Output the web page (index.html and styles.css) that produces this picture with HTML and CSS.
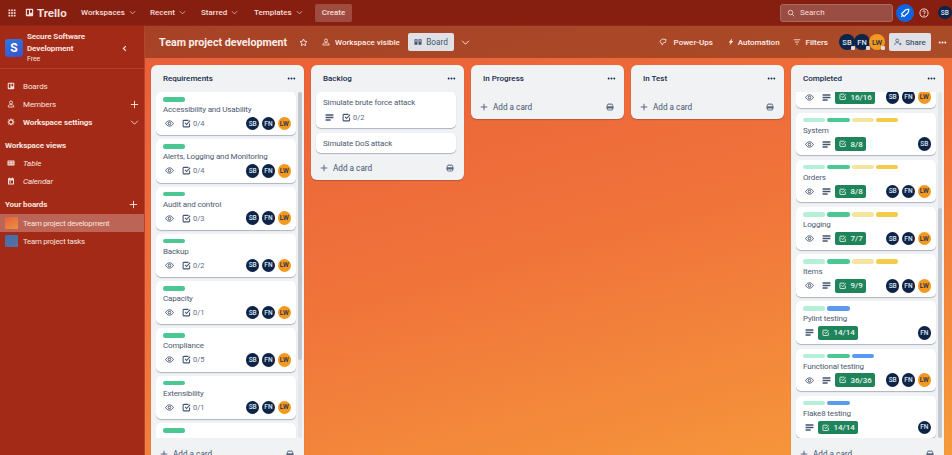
FILE: index.html
```html
<!DOCTYPE html>
<html lang="en">
<head>
<meta charset="utf-8">
<title>Team project development | Trello</title>
<link rel="stylesheet" href="styles.css">
</head>
<body>
<svg class="defs" aria-hidden="true">
  <symbol id="i-eye" viewBox="0 0 16 16"><path d="M1 8C3 4.800 5.300 3.300 8 3.300S13 4.800 15 8C13 11.200 10.700 12.700 8 12.700S3 11.200 1 8Z" fill="none" stroke="currentColor" stroke-width="1.700"/><circle cx="8" cy="8" r="2.300" fill="none" stroke="currentColor" stroke-width="1.700"/></symbol>
  <symbol id="i-check" viewBox="0 0 16 16"><path d="M13.500 8v5a1 1 0 0 1-1 1H3a1 1 0 0 1-1-1V3.500a1 1 0 0 1 1-1h8.500" fill="none" stroke="currentColor" stroke-width="1.900"/><path d="M5.500 7 8 9.800l6.500-7" fill="none" stroke="currentColor" stroke-width="1.900"/></symbol>
  <symbol id="i-lines" viewBox="0 0 16 16"><path d="M1 3.500h14M1 8h14M1 12.500h9" fill="none" stroke="currentColor" stroke-width="2.400"/></symbol>
  <symbol id="i-plus" viewBox="0 0 16 16"><path d="M8 1.500v13M1.500 8h13" fill="none" stroke="currentColor" stroke-width="1.700"/></symbol>
  <symbol id="i-down" viewBox="0 0 16 16"><path d="M2 5l6 6 6-6" fill="none" stroke="currentColor" stroke-width="1.500"/></symbol>
  <symbol id="i-left" viewBox="0 0 16 16"><path d="M11 2.500 5.500 8l5.500 5.500" fill="none" stroke="currentColor" stroke-width="2.800"/></symbol>
  <symbol id="i-dots" viewBox="0 0 16 16"><circle cx="3" cy="8" r="1.700" fill="currentColor"/><circle cx="8" cy="8" r="1.700" fill="currentColor"/><circle cx="13" cy="8" r="1.700" fill="currentColor"/></symbol>
  <symbol id="i-template" viewBox="0 0 16 16"><rect x="2.500" y="2.500" width="11" height="11.500" rx="2" fill="none" stroke="currentColor" stroke-width="1.800"/><rect x="1" y="6.500" width="14" height="4.500" rx="1" fill="currentColor"/><path d="M5 2.500V1M8 2.500V1M11 2.500V1" stroke="currentColor" stroke-width="1.300"/></symbol>
  <symbol id="i-board" viewBox="0 0 16 16"><path fill-rule="evenodd" fill="currentColor" d="M3 1.500h10A1.500 1.500 0 0 1 14.500 3v10a1.500 1.500 0 0 1-1.500 1.500H3A1.500 1.500 0 0 1 1.500 13V3A1.500 1.500 0 0 1 3 1.500ZM3.500 3.500v8h3.500v-8ZM9 3.500v5h3.500v-5Z"/></symbol>
  <symbol id="i-views" viewBox="0 0 16 16"><path fill-rule="evenodd" fill="currentColor" d="M1 2.500h6v11H1ZM9 2.500h6v11H9ZM2.800 4.500v3h2.400v-3ZM10.800 4.500v3h2.400v-3Z"/></symbol>
  <symbol id="i-person" viewBox="0 0 16 16"><circle cx="8" cy="5" r="3" fill="none" stroke="currentColor" stroke-width="1.700"/><path d="M2.500 14v-1.500C2.500 10.500 4 9.500 5.500 9.500h5c1.500 0 3 1 3 3V14Z" fill="none" stroke="currentColor" stroke-width="1.700"/></symbol>
  <symbol id="i-gear" viewBox="0 0 16 16"><circle cx="8" cy="8" r="4.300" fill="none" stroke="currentColor" stroke-width="2.200"/><path d="M8 1v2.500M8 12.500V15M1 8h2.500M12.500 8H15M3 3l1.800 1.800M11.200 11.200 13 13M13 3l-1.800 1.800M4.800 11.200 3 13" stroke="currentColor" stroke-width="1.800"/></symbol>
  <symbol id="i-table" viewBox="0 0 16 16"><path fill-rule="evenodd" fill="currentColor" d="M2 3h12a1 1 0 0 1 1 1v8a1 1 0 0 1-1 1H2a1 1 0 0 1-1-1V4a1 1 0 0 1 1-1Zm1 2v1.500h4V5Zm6 0v1.500h4V5ZM3 8v1h4V8Zm6 0v1h4V8Zm-6 2.500V11h4v-.5Zm6 0V11h4v-.5Z"/></symbol>
  <symbol id="i-cal" viewBox="0 0 16 16"><path fill-rule="evenodd" fill="currentColor" d="M4 1h1.500v1.500h5V1H12v1.500h1a1 1 0 0 1 1 1V14a1 1 0 0 1-1 1H3a1 1 0 0 1-1-1V3.500a1 1 0 0 1 1-1h1ZM4 7v6h8V7Z"/><rect x="5" y="8.500" width="3" height="2.500" fill="currentColor"/></symbol>
  <symbol id="i-star" viewBox="0 0 16 16"><path d="m8 1.800 1.900 4 4.300.5-3.200 3 .9 4.300L8 11.500l-3.900 2.100.9-4.300-3.200-3 4.300-.5Z" fill="none" stroke="currentColor" stroke-width="1.400"/></symbol>
  <symbol id="i-group" viewBox="0 0 16 16"><circle cx="8" cy="5" r="3" fill="none" stroke="currentColor" stroke-width="1.600"/><path d="M1.500 14c.3-2.800 2-4.200 3.500-4.200h6c1.500 0 3.200 1.400 3.500 4.200Z" fill="none" stroke="currentColor" stroke-width="1.600"/></symbol>
  <symbol id="i-bolt" viewBox="0 0 16 16"><path d="M10 1 3.500 9H7l-2 6 7.500-9H9Z" fill="currentColor"/></symbol>
  <symbol id="i-filter" viewBox="0 0 16 16"><path d="M1.500 3.500h13M4 8h8M6.500 12.500h3" fill="none" stroke="currentColor" stroke-width="1.600"/></symbol>
  <symbol id="i-rocket" viewBox="0 0 16 16"><path d="M14 2c-4-.3-7 1.500-8.800 5L4 7.500 2.500 9.500l4 4 2-1.500.5-1.200C12.500 9 14.300 6 14 2Z" fill="none" stroke="currentColor" stroke-width="1.800"/><path d="M2 14l2-2" stroke="currentColor" stroke-width="1.800"/></symbol>
  <symbol id="i-power" viewBox="0 0 16 16"><path d="M14 3 6.500 2 2 6.500 6.500 14 9 9.500l4-1Z" fill="none" stroke="currentColor" stroke-width="1.600"/></symbol>
  <symbol id="i-share" viewBox="0 0 16 16"><circle cx="6.500" cy="5" r="3" fill="none" stroke="currentColor" stroke-width="1.500"/><path d="M1.500 14c0-3 1.500-4.500 3.500-4.500h3c1 0 1.500.3 2 .8M12.500 9.500v5M10 12h5" fill="none" stroke="currentColor" stroke-width="1.500"/></symbol>
  <symbol id="i-search" viewBox="0 0 16 16"><circle cx="7" cy="7" r="4.500" fill="none" stroke="currentColor" stroke-width="1.600"/><path d="m10.500 10.500 4 4" stroke="currentColor" stroke-width="1.600"/></symbol>
  <symbol id="i-help" viewBox="0 0 16 16"><circle cx="8" cy="8" r="6.500" fill="none" stroke="currentColor" stroke-width="1.500"/><path d="M5.800 6.300C6 5 7 4.600 8 4.600c1.300 0 2.200.8 2.200 1.800 0 1.500-2.200 1.500-2.200 3.200" fill="none" stroke="currentColor" stroke-width="1.500"/><circle cx="8" cy="11.600" r="1" fill="currentColor"/></symbol>
  <symbol id="i-apps" viewBox="0 0 16 16"><g fill="currentColor"><rect x="1" y="1" width="3.400" height="3.400"/><rect x="6.300" y="1" width="3.400" height="3.400"/><rect x="11.600" y="1" width="3.400" height="3.400"/><rect x="1" y="6.300" width="3.400" height="3.400"/><rect x="6.300" y="6.300" width="3.400" height="3.400"/><rect x="11.600" y="6.300" width="3.400" height="3.400"/><rect x="1" y="11.600" width="3.400" height="3.400"/><rect x="6.300" y="11.600" width="3.400" height="3.400"/><rect x="11.600" y="11.600" width="3.400" height="3.400"/></g></symbol>
</svg>

<header class="topbar">
  <svg class="ico ico-apps"><use href="#i-apps"/></svg>
  <div class="logo"><svg class="ico ico-logo"><use href="#i-board"/></svg><span>Trello</span></div>
  <nav class="nav">
    <span class="nav-item nav-w">Workspaces <svg class="ico ico-chev"><use href="#i-down"/></svg></span>
    <span class="nav-item nav-r">Recent <svg class="ico ico-chev"><use href="#i-down"/></svg></span>
    <span class="nav-item nav-s">Starred <svg class="ico ico-chev"><use href="#i-down"/></svg></span>
    <span class="nav-item nav-t">Templates <svg class="ico ico-chev"><use href="#i-down"/></svg></span>
    <span class="create">Create</span>
  </nav>
  <div class="top-right">
    <div class="search"><svg class="ico ico-search"><use href="#i-search"/></svg><span>Search</span></div>
    <span class="rocket"><svg class="ico ico-rocket"><use href="#i-rocket"/></svg></span>
    <svg class="ico ico-help"><use href="#i-help"/></svg>
    <span class="av av-me">SB</span>
  </div>
</header>

<div class="main">
  <aside class="sidebar">
    <div class="ws">
      <span class="ws-tile">S</span>
      <div class="ws-text"><div class="ws-name">Secure Software<br>Development</div><div class="ws-plan">Free</div></div>
      <svg class="ico ico-collapse"><use href="#i-left"/></svg>
    </div>
    <div class="side-row"><svg class="ico ico-side"><use href="#i-board"/></svg><span>Boards</span></div>
    <div class="side-row"><svg class="ico ico-side"><use href="#i-person"/></svg><span>Members</span><svg class="ico ico-side-end"><use href="#i-plus"/></svg></div>
    <div class="side-row side-strong"><svg class="ico ico-side"><use href="#i-gear"/></svg><span>Workspace settings</span><svg class="ico ico-side-end"><use href="#i-down"/></svg></div>
    <div class="side-head">Workspace views</div>
    <div class="side-row side-em"><svg class="ico ico-side"><use href="#i-table"/></svg><span>Table</span></div>
    <div class="side-row side-em"><svg class="ico ico-side"><use href="#i-cal"/></svg><span>Calendar</span></div>
    <div class="side-head side-head-boards"><span>Your boards</span><svg class="ico ico-side-end"><use href="#i-plus"/></svg></div>
    <div class="side-board is-active"><span class="thumb thumb-orange"></span><span>Team project development</span></div>
    <div class="side-board"><span class="thumb thumb-blue"></span><span>Team project tasks</span></div>
  </aside>

  <section class="board">
    <div class="boardbar">
      <h1 class="board-title">Team project development</h1>
      <svg class="ico ico-star"><use href="#i-star"/></svg>
      <span class="bar-item bar-vis"><svg class="ico ico-bar"><use href="#i-group"/></svg>Workspace visible</span>
      <span class="view-btn"><svg class="ico ico-bar"><use href="#i-views"/></svg>Board</span>
      <svg class="ico ico-view-chev"><use href="#i-down"/></svg>
      <div class="bar-right">
        <span class="bar-item bar-power"><svg class="ico ico-bar"><use href="#i-power"/></svg>Power-Ups</span>
        <span class="bar-item bar-auto"><svg class="ico ico-bar"><use href="#i-bolt"/></svg>Automation</span>
        <span class="bar-item bar-filter"><svg class="ico ico-bar"><use href="#i-filter"/></svg>Filters</span>
        <div class="members">
          <span class="av av-bar">SB<i class="av-tag"></i></span><span class="av av-bar">FN<i class="av-tag"></i></span><span class="av av-bar av-lw">LW<i class="av-tag"></i></span>
        </div>
        <span class="share"><svg class="ico ico-bar"><use href="#i-share"/></svg>Share</span>
        <svg class="ico ico-more"><use href="#i-dots"/></svg>
      </div>
    </div>

    <div class="lists">
      <div class="list list-tall">
        <div class="list-head"><span>Requirements</span><svg class="ico ico-dots"><use href="#i-dots"/></svg></div>
        <div class="scroll">
          <div class="cards">
            <article class="card"><div class="labels"><i class="lb lb-g"></i></div><div class="card-title">Accessibility and Usability</div><div class="foot"><svg class="ico ico-f"><use href="#i-eye"/></svg><svg class="ico ico-f"><use href="#i-check"/></svg><span class="count">0/4</span><div class="avs"><span class="av">SB</span><span class="av">FN</span><span class="av av-lw">LW</span></div></div></article>
            <article class="card"><div class="labels"><i class="lb lb-g"></i></div><div class="card-title">Alerts, Logging and Monitoring</div><div class="foot"><svg class="ico ico-f"><use href="#i-eye"/></svg><svg class="ico ico-f"><use href="#i-check"/></svg><span class="count">0/4</span><div class="avs"><span class="av">SB</span><span class="av">FN</span><span class="av av-lw">LW</span></div></div></article>
            <article class="card"><div class="labels"><i class="lb lb-g"></i></div><div class="card-title">Audit and control</div><div class="foot"><svg class="ico ico-f"><use href="#i-eye"/></svg><svg class="ico ico-f"><use href="#i-check"/></svg><span class="count">0/3</span><div class="avs"><span class="av">SB</span><span class="av">FN</span><span class="av av-lw">LW</span></div></div></article>
            <article class="card"><div class="labels"><i class="lb lb-g"></i></div><div class="card-title">Backup</div><div class="foot"><svg class="ico ico-f"><use href="#i-eye"/></svg><svg class="ico ico-f"><use href="#i-check"/></svg><span class="count">0/2</span><div class="avs"><span class="av">SB</span><span class="av">FN</span><span class="av av-lw">LW</span></div></div></article>
            <article class="card"><div class="labels"><i class="lb lb-g"></i></div><div class="card-title">Capacity</div><div class="foot"><svg class="ico ico-f"><use href="#i-eye"/></svg><svg class="ico ico-f"><use href="#i-check"/></svg><span class="count">0/1</span><div class="avs"><span class="av">SB</span><span class="av">FN</span><span class="av av-lw">LW</span></div></div></article>
            <article class="card"><div class="labels"><i class="lb lb-g"></i></div><div class="card-title">Compliance</div><div class="foot"><svg class="ico ico-f"><use href="#i-eye"/></svg><svg class="ico ico-f"><use href="#i-check"/></svg><span class="count">0/5</span><div class="avs"><span class="av">SB</span><span class="av">FN</span><span class="av av-lw">LW</span></div></div></article>
            <article class="card"><div class="labels"><i class="lb lb-g"></i></div><div class="card-title">Extensibility</div><div class="foot"><svg class="ico ico-f"><use href="#i-eye"/></svg><svg class="ico ico-f"><use href="#i-check"/></svg><span class="count">0/1</span><div class="avs"><span class="av">SB</span><span class="av">FN</span><span class="av av-lw">LW</span></div></div></article>
            <article class="card"><div class="labels"><i class="lb lb-g"></i></div><div class="card-title">Manageability</div></article>
          </div>
          <div class="track"><div class="thumb-bar thumb-req"></div></div>
        </div>
        <div class="add"><svg class="ico ico-plus"><use href="#i-plus"/></svg><span>Add a card</span><svg class="ico ico-tpl"><use href="#i-template"/></svg></div>
      </div>

      <div class="list">
        <div class="list-head"><span>Backlog</span><svg class="ico ico-dots"><use href="#i-dots"/></svg></div>
        <div class="cards cards-plain">
          <article class="card card-auto"><div class="card-title card-title-first">Simulate brute force attack</div><div class="foot"><svg class="ico ico-f"><use href="#i-lines"/></svg><svg class="ico ico-f"><use href="#i-check"/></svg><span class="count">0/2</span></div></article>
          <article class="card card-auto"><div class="card-title card-title-first">Simulate DoS attack</div></article>
        </div>
        <div class="add"><svg class="ico ico-plus"><use href="#i-plus"/></svg><span>Add a card</span><svg class="ico ico-tpl"><use href="#i-template"/></svg></div>
      </div>

      <div class="list">
        <div class="list-head"><span>In Progress</span><svg class="ico ico-dots"><use href="#i-dots"/></svg></div>
        <div class="add add-empty"><svg class="ico ico-plus"><use href="#i-plus"/></svg><span>Add a card</span><svg class="ico ico-tpl"><use href="#i-template"/></svg></div>
      </div>

      <div class="list">
        <div class="list-head"><span>In Test</span><svg class="ico ico-dots"><use href="#i-dots"/></svg></div>
        <div class="add add-empty"><svg class="ico ico-plus"><use href="#i-plus"/></svg><span>Add a card</span><svg class="ico ico-tpl"><use href="#i-template"/></svg></div>
      </div>

      <div class="list list-tall">
        <div class="list-head"><span>Completed</span><svg class="ico ico-dots"><use href="#i-dots"/></svg></div>
        <div class="scroll">
          <div class="cards cards-scrolled">
            <article class="card"><div class="labels"></div><div class="card-title"></div><div class="foot"><svg class="ico ico-f"><use href="#i-eye"/></svg><svg class="ico ico-f"><use href="#i-lines"/></svg><span class="badge"><svg class="ico ico-b"><use href="#i-check"/></svg>16/16</span><div class="avs"><span class="av">SB</span><span class="av">FN</span><span class="av av-lw">LW</span></div></div></article>
            <article class="card"><div class="labels"><i class="lb lb-m"></i><i class="lb lb-g"></i><i class="lb lb-y"></i><i class="lb lb-o"></i></div><div class="card-title">System</div><div class="foot"><svg class="ico ico-f"><use href="#i-eye"/></svg><svg class="ico ico-f"><use href="#i-lines"/></svg><span class="badge"><svg class="ico ico-b"><use href="#i-check"/></svg>8/8</span><div class="avs"><span class="av">SB</span></div></div></article>
            <article class="card"><div class="labels"><i class="lb lb-m"></i><i class="lb lb-g"></i><i class="lb lb-y"></i><i class="lb lb-o"></i></div><div class="card-title">Orders</div><div class="foot"><svg class="ico ico-f"><use href="#i-eye"/></svg><svg class="ico ico-f"><use href="#i-lines"/></svg><span class="badge"><svg class="ico ico-b"><use href="#i-check"/></svg>8/8</span><div class="avs"><span class="av">SB</span><span class="av">FN</span><span class="av av-lw">LW</span></div></div></article>
            <article class="card"><div class="labels"><i class="lb lb-m"></i><i class="lb lb-g"></i><i class="lb lb-y"></i><i class="lb lb-o"></i></div><div class="card-title">Logging</div><div class="foot"><svg class="ico ico-f"><use href="#i-eye"/></svg><svg class="ico ico-f"><use href="#i-lines"/></svg><span class="badge"><svg class="ico ico-b"><use href="#i-check"/></svg>7/7</span><div class="avs"><span class="av">SB</span><span class="av">FN</span><span class="av av-lw">LW</span></div></div></article>
            <article class="card"><div class="labels"><i class="lb lb-m"></i><i class="lb lb-g"></i><i class="lb lb-y"></i><i class="lb lb-o"></i></div><div class="card-title">Items</div><div class="foot"><svg class="ico ico-f"><use href="#i-eye"/></svg><svg class="ico ico-f"><use href="#i-lines"/></svg><span class="badge"><svg class="ico ico-b"><use href="#i-check"/></svg>9/9</span><div class="avs"><span class="av">SB</span><span class="av">FN</span><span class="av av-lw">LW</span></div></div></article>
            <article class="card"><div class="labels"><i class="lb lb-m"></i><i class="lb lb-b"></i></div><div class="card-title">Pylint testing</div><div class="foot"><svg class="ico ico-f"><use href="#i-lines"/></svg><span class="badge"><svg class="ico ico-b"><use href="#i-check"/></svg>14/14</span><div class="avs"><span class="av">FN</span></div></div></article>
            <article class="card"><div class="labels"><i class="lb lb-m"></i><i class="lb lb-g"></i><i class="lb lb-b"></i></div><div class="card-title">Functional testing</div><div class="foot"><svg class="ico ico-f"><use href="#i-eye"/></svg><svg class="ico ico-f"><use href="#i-lines"/></svg><span class="badge"><svg class="ico ico-b"><use href="#i-check"/></svg>36/36</span><div class="avs"><span class="av">SB</span><span class="av">FN</span><span class="av av-lw">LW</span></div></div></article>
            <article class="card"><div class="labels"><i class="lb lb-m"></i><i class="lb lb-b"></i></div><div class="card-title">Flake8 testing</div><div class="foot"><svg class="ico ico-f"><use href="#i-lines"/></svg><span class="badge"><svg class="ico ico-b"><use href="#i-check"/></svg>14/14</span><div class="avs"><span class="av">FN</span></div></div></article>
          </div>
          <div class="track"><div class="thumb-bar thumb-done"></div></div>
        </div>
        <div class="add"><svg class="ico ico-plus"><use href="#i-plus"/></svg><span>Add a card</span><svg class="ico ico-tpl"><use href="#i-template"/></svg></div>
      </div>
    </div>
  </section>
</div>
</body>
</html>
```

FILE: styles.css
```css
* { box-sizing: border-box; }
html, body { height: 100%; }
body {
  margin: 0;
  overflow: hidden;
  display: flex;
  flex-direction: column;
  font-family: Roboto, "Noto Sans", sans-serif;
  font-size: 8.2px;
  color: #fff;
  background: #a22a17;
}
.defs { display: none; }
.ico { display: block; flex: none; }

/* top bar */
.topbar {
  height: 26px;
  flex: none;
  display: flex;
  align-items: center;
  padding-left: 8px;
  background: #871f11;
  border-bottom: 1px solid #8f2a1a;
  font-weight: 500;
  font-size: 8px;
  color: #f6dfda;
}
.ico-apps { width: 8px; height: 8px; margin-right: 9px; }
.logo { display: flex; align-items: center; gap: 3px; font-size: 11.500px; font-weight: 700; width: 56px; }
.ico-logo { width: 9px; height: 9px; }
.nav { display: flex; align-items: center; }
.nav-item { display: flex; align-items: center; gap: 4px; }
.nav-w { width: 69px; }
.nav-r { width: 51px; }
.nav-s { width: 53px; }
.nav-t { width: 61px; }
.ico-chev { width: 7px; height: 7px; }
.create {
  height: 18px;
  width: 37px;
  display: flex;
  align-items: center;
  justify-content: center;
  border-radius: 2px;
  background: rgba(255, 255, 255, .2);
}
.top-right { margin-left: auto; display: flex; align-items: center; }
.search {
  width: 113px;
  height: 18px;
  display: flex;
  align-items: center;
  gap: 5px;
  padding-left: 6px;
  border-radius: 3px;
  background: #9a4d42;
  border: 1px solid #a96a60;
  font-weight: 400;
}
.ico-search { width: 8px; height: 8px; }
.rocket {
  width: 18px;
  height: 18px;
  margin-left: 3px;
  border-radius: 50%;
  background: #0c66e4;
  display: flex;
  align-items: center;
  justify-content: center;
  color: #fff;
}
.ico-rocket { width: 10px; height: 10px; }
.ico-help { width: 10px; height: 10px; margin-left: 5px; }
.av-me { margin-left: 9px; margin-right: .5px; }

/* layout */
.main { flex: 1; min-height: 0; display: flex; }

/* sidebar */
.sidebar {
  width: 145px;
  flex: none;
  background: #a22a17;
  border-right: 1px solid #b6432f;
  color: #f8e4df;
  font-size: 8px;
  letter-spacing: -.1px;
}
.ws {
  height: 43px;
  display: flex;
  align-items: flex-start;
  padding: 5px 0 0 5px;
  border-bottom: 1px solid #b2402c;
}
.ws-tile {
  width: 18px;
  height: 18px;
  margin-top: 8px;
  border-radius: 3px;
  background: linear-gradient(160deg, #2f78e0, #3d52c8);
  font-size: 12px;
  font-weight: 700;
  display: flex;
  align-items: center;
  justify-content: center;
  color: #fff;
}
.ws-text { margin-left: 4px; width: 92px; }
.ws-name { font-weight: 700; font-size: 8px; line-height: 11.500px; }
.ws-plan { font-size: 7px; line-height: 11px; }
.ico-collapse { width: 7px; height: 7px; margin: 13.500px 0 0 2px; }
.side-row {
  height: 18px;
  display: flex;
  align-items: center;
  padding: 0 5px 0 7px;
}
.ws + .side-row { margin-top: 8px; }
.ico-side { width: 8px; height: 8px; margin-right: 8px; }
.ico-side-end { width: 9px; height: 9px; margin-left: auto; }
.side-strong { font-weight: 700; }
.side-em { font-style: italic; }
.side-head {
  height: 18px;
  margin-top: 5px;
  padding: 0 6px 0 5px;
  display: flex;
  align-items: center;
  font-weight: 700;
}
.side-head-boards { margin-bottom: 1px; }
.side-board {
  height: 18px;
  display: flex;
  align-items: center;
  gap: 5px;
  padding-left: 5px;
  font-size: 7.800px;
  letter-spacing: -.25px;
}
.is-active { background: rgba(255, 255, 255, .28); }
.thumb { width: 13px; height: 12px; border-radius: 1px; }
.thumb-orange { background: linear-gradient(150deg, #e4603c, #ef9140); }
.thumb-blue { background: linear-gradient(150deg, #3e6fb0, #5e6f9a); }

/* board */
.board {
  flex: 1;
  min-width: 0;
  display: flex;
  flex-direction: column;
  overflow: hidden;
  background: linear-gradient(165deg, #e95d38 0%, #f0733a 50%, #f69a3b 100%);
}
.boardbar {
  height: 32px;
  flex: none;
  display: flex;
  align-items: center;
  padding-left: 14px;
  background: rgba(60, 20, 10, .38);
  font-weight: 500;
  font-size: 8px;
}
.board-title { margin: 0; font-size: 10.700px; font-weight: 700; color: #fbeee9; width: 140px; white-space: nowrap; }
.ico-star { width: 9px; height: 9px; margin-right: 14px; }
.bar-item { display: flex; align-items: center; gap: 5px; white-space: nowrap; color: #fbeee9; }
.ico-bar { width: 8px; height: 8px; }
.bar-vis { width: 86px; }
.view-btn {
  width: 46px;
  height: 18px;
  display: flex;
  align-items: center;
  justify-content: center;
  gap: 4px;
  border-radius: 2px;
  background: #dfe1e6;
  color: #44546f;
  font-weight: 400;
  font-size: 8.200px;
}
.ico-view-chev { width: 9px; height: 9px; margin-left: 7px; }
.bar-right { margin-left: auto; display: flex; align-items: center; padding-right: 5px; }
.bar-power { gap: 7px; margin-right: 14px; }
.bar-auto { gap: 3px; margin-right: 13px; }
.bar-filter { gap: 5px; margin-right: 11px; }
.members { display: flex; margin-right: 4px; }
.members .av-bar { position: relative; width: 16px; height: 16px; margin-right: -1px; font-size: 7.500px; }
.members .av-bar:last-child { margin-right: 0; }
.av-tag {
  position: absolute;
  right: 0;
  bottom: 0;
  width: 4px;
  height: 4px;
  border-radius: 1px;
  background: #d6dbe4;
}
.share {
  width: 42px;
  height: 18px;
  display: flex;
  align-items: center;
  justify-content: center;
  gap: 3px;
  border-radius: 2px;
  background: #dfe1e6;
  color: #44546f;
}
.ico-more { width: 9px; height: 9px; margin-left: 7px; }

/* lists */
.lists {
  flex: 1;
  min-height: 0;
  display: flex;
  align-items: flex-start;
  gap: 7px;
  padding: 7px 0 0 6px;
}
.list {
  width: 153px;
  flex: none;
  display: flex;
  flex-direction: column;
  padding: 0 0 0 5px;
  border-radius: 6px;
  background: #f1f2f4;
  color: #44546f;
  box-shadow: 0 1px 1px rgba(9, 30, 66, .25);
}
.list-tall { height: 400px; }
.list-head {
  height: 27px;
  flex: none;
  display: flex;
  align-items: center;
  padding: 0 8px 0 7px;
  font-size: 8px;
  font-weight: 500;
  color: #172b4d;
}
.ico-dots { width: 9px; height: 9px; margin-left: auto; color: #172b4d; }
.scroll { flex: none; height: 346px; display: flex; overflow: hidden; }
.cards { width: 140px; flex: none; display: flex; flex-direction: column; gap: 4px; }
.cards-plain { height: auto; gap: 5px; padding-bottom: 5px; }
.cards-scrolled { margin-top: -26.500px; gap: 4.700px; }
.card {
  height: 43.300px;
  flex: none;
  padding: 5px 5px 0 7px;
  border-radius: 5px;
  background: #fff;
  box-shadow: 0 1px 1px rgba(9, 30, 66, .3);
}
.cards-scrolled .card { height: 42.500px; }
.card-auto { height: auto; padding-top: 3.500px; padding-bottom: 3.500px; }
.card-auto .foot { margin-top: 2px; margin-bottom: 1px; height: 13px; }
.labels { display: flex; gap: 2px; height: 4.500px; }
.lb { width: 22.300px; height: 4.500px; border-radius: 2.250px; display: block; }
.lb-g { background: #4bc794; }
.lb-m { background: #b5efd8; }
.lb-y { background: #f5e3a0; }
.lb-o { background: #f2cb4b; }
.lb-b { background: #5a9bf0; }
.card-title { margin-top: 1.500px; height: 13px; line-height: 13px; font-size: 8px; letter-spacing: -.15px; color: #4d5a70; white-space: nowrap; }
.card-title-first { margin-top: 0; }
.foot { display: flex; align-items: center; height: 14px; margin-top: .5px; gap: 8px; padding-left: 2px; }
.ico-f { width: 9px; height: 9px; color: #44546f; }
.count { margin-left: -6px; font-size: 7.500px; color: #626f86; }
.badge {
  height: 13.500px;
  padding: 0 3px 0 4px;
  margin-left: -4px;
  display: flex;
  align-items: center;
  gap: 4px;
  border-radius: 2px;
  background: #1f845a;
  color: #e8f5ef;
  font-size: 8px;
  font-weight: 500;
}
.ico-b { width: 7.500px; height: 7.500px; }
.avs { margin-left: auto; display: flex; gap: 2.300px; }
.av {
  width: 13.500px;
  height: 13.500px;
  flex: none;
  border-radius: 50%;
  background: #0d2347;
  color: #dfe5ee;
  font-size: 6.500px;
  font-weight: 500;
  display: flex;
  align-items: center;
  justify-content: center;
}
.av-lw { background: #f4991f; color: #172b4d; }
.track { width: 4px; margin-left: 2px; height: 346px; border-radius: 2px; background: #e4e6ea; }
.thumb-bar { width: 4px; border-radius: 2px; background: #c3c7cf; }
.thumb-req { height: 268px; }
.thumb-done { height: 230px; margin-top: 116px; }
.add {
  height: 18px;
  flex: none;
  display: flex;
  align-items: center;
  gap: 5px;
  padding: 1px 10px 0 4px;
  margin-top: 6px;
  margin-bottom: 4px;
  color: #44546f;
}
.add-empty { margin-top: 5px; }
.cards-plain + .add { margin-top: 0; }
.ico-plus { width: 8px; height: 8px; }
.ico-tpl { width: 8px; height: 8px; margin-left: auto; color: #5a6880; }
```
